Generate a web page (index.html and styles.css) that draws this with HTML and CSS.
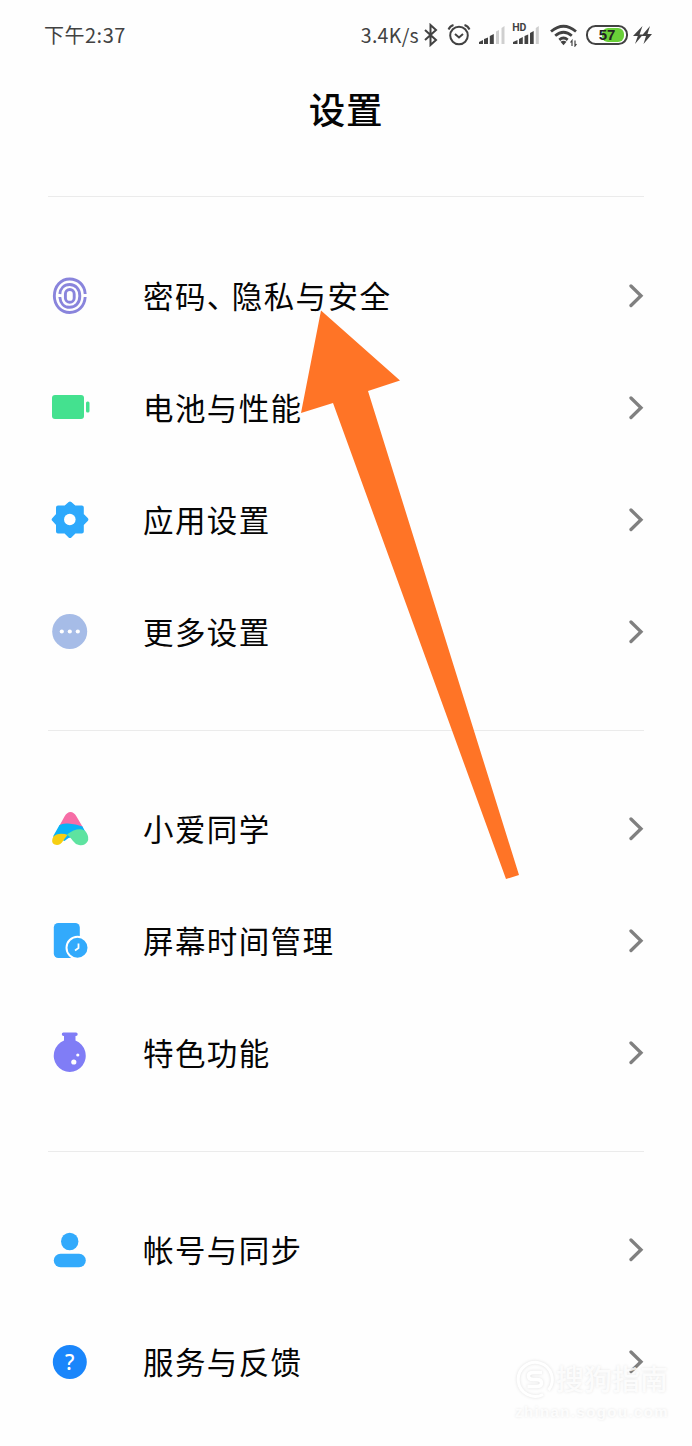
FILE: index.html
```html
<!DOCTYPE html>
<html lang="zh-CN">
<head>
<meta charset="utf-8">
<title>设置</title>
<link rel="stylesheet" href="styles.css">
</head>
<body>
<main class="screen">
  <header class="status">
    <span class="clock">下午2:37</span>
    <div class="indicators">
      <span class="speed">3.4K/s</span>
      <svg class="bt" width="16" height="24" viewBox="0 0 16 24"><path d="M2 7l11 10-5.500 5V2L13 7 2 17"/></svg>
      <svg class="alarm" width="24" height="24" viewBox="0 0 24 24"><circle cx="12" cy="12.500" r="8.800"/><path d="M8 11l4 3.500 4-3.500M1.500 6.500Q3 3 6.500 2M22.500 6.500Q21 3 17.500 2"/></svg>
      <svg class="signal" width="27" height="24" viewBox="0 0 27 24"><path d="M0 21v-2l4-2v4zM5 21v-5l4-1.500V21zM10.800 21v-8l4-2v10z"/><path class="off" d="M17 21V8.500l3-1.500v14zM22.500 21V5l3-2v18z"/></svg>
      <svg class="signal hd" width="28" height="26" viewBox="-1 -1 28 26"><text x="-.8" y="8">HD</text><path d="M0 21v-2l4.500-2v4zM6 21v-5l3.800-2v7zM11.500 21v-8l3.700-1.500V21zM17 21V10l3.700-2v13z"/><path class="off" d="M22.800 21V5l3-2v18z"/></svg>
      <svg class="wifi" width="28" height="24" viewBox="0 0 28 24"><path d="M1 8.500Q13.500-2 26 8.500M5.200 12.800q8.300-7 16.600 0M9.300 16.800q4.200-3.500 8.400 0"/><path class="dot" d="M10.500 18.800q3-2 6 0l-3 3.500z"/><path class="data" d="M22 23v-5.500l-1.500 2M25 17.500V23l1.500-2"/></svg>
      <svg class="battery" width="42" height="20" viewBox="0 0 42 20"><rect class="fill" x="16" y="3" width="22" height="14" rx="6"/><rect class="case" x="1" y="1" width="40" height="18" rx="8.500"/><text x="21" y="15.200">57</text></svg>
      <svg class="bolt" width="19" height="20" viewBox="0 0 19 20"><path d="M9.500 1L0 11h4.800L2 19 10 9.500H6.500zM17 1L8.500 11h4.500L10.500 19 19 9h-4.500z"/></svg>
    </div>
  </header>
  <h1 class="title">设置</h1>

  <section class="group first">
    <a class="row">
      <svg class="icon" viewBox="0 0 40 40"><g fill="none" stroke="#8984dc" stroke-width="2.900"><path d="M4.300 20.500C4.300 10 11 3 19.700 3 28 3 34.800 9 35.200 18M35.200 21C34.500 30.500 28 36.500 19.700 36.500 11.500 36.500 4.300 30 4.300 19.500"/><path d="M9.800 18C10.300 12.500 14 8.500 19.700 8.500 25.500 8.500 29.800 13 29.800 20S25.500 31.300 19.700 31.300C14 31.300 10.300 27 9.800 21"/><rect x="15.400" y="13.500" width="8.800" height="12.800" rx="4.400"/></g></svg>
      <span class="label">密码<span class="comma">、</span>隐私与安全</span>
      <svg class="chev" viewBox="0 0 16 24"><path d="M3 2l10 9.700L3 21.500"/></svg>
    </a>
    <a class="row">
      <svg class="icon" viewBox="0 0 40 40"><g fill="#44e18f"><rect x="2" y="7" width="32" height="24" rx="3"/><rect x="36" y="13.500" width="3.500" height="11" rx="1.500"/></g></svg>
      <span class="label">电池与性能</span>
      <svg class="chev" viewBox="0 0 16 24"><path d="M3 2l10 9.700L3 21.500"/></svg>
    </a>
    <a class="row">
      <svg class="icon" viewBox="0 0 40 40"><path fill="#2da9fc" stroke="#2da9fc" stroke-width="4" stroke-linejoin="round" d="M20 3.500l4.500 4h7.300v7.300l4.500 4.700-4.500 4.700v7.300h-7.300l-4.500 4.500-4.500-4.500H8v-7.300l-4.300-4.700L8 14.800V7.500h7.500z"/><circle cx="19.800" cy="19.500" r="5.800" fill="#fff"/></svg>
      <span class="label">应用设置</span>
      <svg class="chev" viewBox="0 0 16 24"><path d="M3 2l10 9.700L3 21.500"/></svg>
    </a>
    <a class="row">
      <svg class="icon" viewBox="0 0 40 40"><circle cx="19.700" cy="19.500" r="17.500" fill="#a6bce7"/><g fill="#fff"><circle cx="11.800" cy="19.500" r="2.100"/><circle cx="19.800" cy="19.500" r="2.100"/><circle cx="27.800" cy="19.500" r="2.100"/></g></svg>
      <span class="label">更多设置</span>
      <svg class="chev" viewBox="0 0 16 24"><path d="M3 2l10 9.700L3 21.500"/></svg>
    </a>
  </section>

  <section class="group">
    <a class="row">
      <svg class="icon" viewBox="0 0 40 40"><path fill="#f66da6" d="M9 17.500L14.500 7.500Q17 3 20.500 3t6 4.500l6.500 11z"/><path fill="#08b2f6" d="M3 27.500L9.500 16q3.500-2 8.500-1.500 8 .5 14.500 3l4 7.500-18 4-4 3z"/><path fill="#f6cf12" d="M3.200 28q2.800-3.300 8-3.300 4.300 0 6.300 1.300-2.500 3-4.500 6-2.500 4-6 4-5.500-.5-4.800-5 .2-1.500 1-3z"/><path fill="#5ee3a0" d="M17 25.500q7-5.500 13.500-5.200 4 .2 6 3.500 3 5 1 8.700-2.500 4.500-8.500 3.500-3.500-.5-6-4-2.500-4-6-6.500z"/></svg>
      <span class="label">小爱同学</span>
      <svg class="chev" viewBox="0 0 16 24"><path d="M3 2l10 9.700L3 21.500"/></svg>
    </a>
    <a class="row">
      <svg class="icon" viewBox="0 0 40 40"><rect x="3.800" y="2" width="26" height="35" rx="4.500" fill="#32aafc"/><circle cx="27.500" cy="26.800" r="11" fill="#32aafc" stroke="#fff" stroke-width="2"/><path d="M28.500 22.500v4.500l-3.500 2.500" fill="none" stroke="#fff" stroke-width="1.800"/></svg>
      <span class="label">屏幕时间管理</span>
      <svg class="chev" viewBox="0 0 16 24"><path d="M3 2l10 9.700L3 21.500"/></svg>
    </a>
    <a class="row">
      <svg class="icon tall" viewBox="0 0 40 44"><path fill="#807df6" d="M13.500 1.500h12.500q1.700 0 1.700 1.700T26 5h-.5v4.600a16 16.200 0 1 1-11.500 0V5h-.5q-1.700 0-1.700-1.800t1.700-1.700z"/><circle cx="23.800" cy="31" r="2.600" fill="#fff"/><circle cx="27.800" cy="24" r="1.600" fill="#fff"/></svg>
      <span class="label">特色功能</span>
      <svg class="chev" viewBox="0 0 16 24"><path d="M3 2l10 9.700L3 21.500"/></svg>
    </a>
  </section>

  <section class="group">
    <a class="row">
      <svg class="icon" viewBox="0 0 40 40"><g fill="#32aafc"><circle cx="19.700" cy="11.500" r="8.700"/><rect x="3.800" y="23.700" width="32" height="13.500" rx="6.700"/></g></svg>
      <span class="label">帐号与同步</span>
      <svg class="chev" viewBox="0 0 16 24"><path d="M3 2l10 9.700L3 21.500"/></svg>
    </a>
    <a class="row">
      <svg class="icon" viewBox="0 0 40 40"><circle cx="19.800" cy="20" r="17" fill="#1a86fb"/><text class="help" x="19.800" y="27.500">?</text></svg>
      <span class="label">服务与反馈</span>
      <svg class="chev" viewBox="0 0 16 24"><path d="M3 2l10 9.700L3 21.500"/></svg>
    </a>
  </section>

  <svg class="pointer" viewBox="0 0 100 570"><path d="M21 .5L100 70.500 68 81l151 484-13 4L33 93 1 103z"/></svg>

  <aside class="watermark">
    <svg class="seal" viewBox="0 0 40 40"><path d="M33.500 30A17 17 0 1 0 28 34.500"/><path class="letter" d="M27 12.500h-8.500q-5 0-5 3.500t5 3.500h3q5 0 5 3.500t-5 3.500H12.500"/></svg>
    <span class="brand">搜狗指南</span>
    <span class="site">zhinan.sogou.com</span>
  </aside>
</main>
</body>
</html>
```
FILE: styles.css
```css
body {
  margin: 0;
  background: #fefefe;
  font-family: "Noto Sans CJK SC", sans-serif;
  color: #050505;
}

.screen {
  position: relative;
  width: 692px;
  height: 1446px;
  overflow: hidden;
}

.status {
  display: flex;
  justify-content: space-between;
  align-items: center;
  height: 70px;
  padding: 0 40px 0 44px;
  box-sizing: border-box;
  color: #424242;
}

.clock {
  padding-bottom: 2px;
  font-size: 20px;
  letter-spacing: 0.5px;
}

.indicators {
  display: flex;
  align-items: center;
}

.indicators svg {
  fill: none;
  stroke: #424242;
  stroke-width: 2;
  flex: none;
}

.speed {
  padding-bottom: 2px;
  font-size: 19.5px;
  letter-spacing: 0.3px;
  margin-right: 4px;
}

.alarm { margin-left: 8px; }

.indicators .signal {
  fill: #424242;
  stroke: none;
  margin-left: 8px;
}

.signal .off { fill: #cfcfcf; }

.indicators .hd {
  margin-left: 6px;
  overflow: visible;
}

.signal text {
  font: bold 10.5px Roboto, sans-serif;
}

.indicators .wifi {
  margin-left: 10px;
  stroke-width: 2.8;
}

.indicators .wifi .dot {
  fill: #424242;
  stroke: none;
}

.wifi .data { stroke-width: 1.2; }

.battery { margin-left: 8px; }

.battery .fill {
  fill: #69cf38;
  stroke: none;
}

.battery text {
  font: bold 15px "Liberation Sans", sans-serif;
  fill: #222;
  stroke: none;
  text-anchor: middle;
}

.indicators .bolt {
  margin-left: 5px;
  fill: #424242;
  stroke: none;
}

.title {
  height: 126px;
  margin: 0;
  padding-top: 12px;
  box-sizing: border-box;
  font-size: 36.5px;
  line-height: 54px;
  font-weight: 500;
  letter-spacing: 0.8px;
  text-align: center;
}

.group {
  margin: 0 48px;
  padding: 42px 0;
  border-top: 1px solid #ebebeb;
}

.first { padding-top: 43px; }

.row {
  display: flex;
  align-items: center;
  height: 112px;
}

.icon {
  width: 40px;
  height: 40px;
  margin-left: 2px;
  flex: none;
}

.tall { height: 44px; }

.label {
  flex: 1;
  margin-left: 53px;
  padding-bottom: 3px;
  font-size: 30.5px;
  line-height: 44px;
  letter-spacing: 1.4px;
}

.comma { letter-spacing: -5.5px; }

.chev {
  width: 16px;
  height: 24px;
  flex: none;
  fill: none;
  stroke: #808080;
  stroke-width: 3.3;
  stroke-linecap: round;
}

.help {
  font: 500 21px "Noto Sans", sans-serif;
  fill: #fff;
  text-anchor: middle;
}

.pointer {
  position: absolute;
  left: 300px;
  top: 310px;
  width: 100px;
  height: 570px;
  overflow: visible;
  fill: #ff7426;
}

.watermark {
  position: absolute;
  left: 515px;
  top: 1360px;
  display: grid;
  grid-template-columns: 41px auto;
  align-items: center;
  color: rgba(255, 255, 255, 0.85);
  text-shadow: 0 0 3px rgba(0, 0, 0, 0.1);
}

.seal {
  width: 40px;
  height: 40px;
  fill: none;
  stroke: #fff;
  stroke-width: 3;
  filter: drop-shadow(0 0 1.5px rgba(0, 0, 0, 0.12));
}

.seal .letter { stroke-width: 3.6; }

.brand {
  font-size: 28px;
  line-height: 36px;
  padding-bottom: 4px;
  font-weight: 500;
}

.site {
  grid-column: 1 / -1;
  font: bold 15px/24px "Liberation Sans", sans-serif;
  letter-spacing: 1.4px;
}
```
